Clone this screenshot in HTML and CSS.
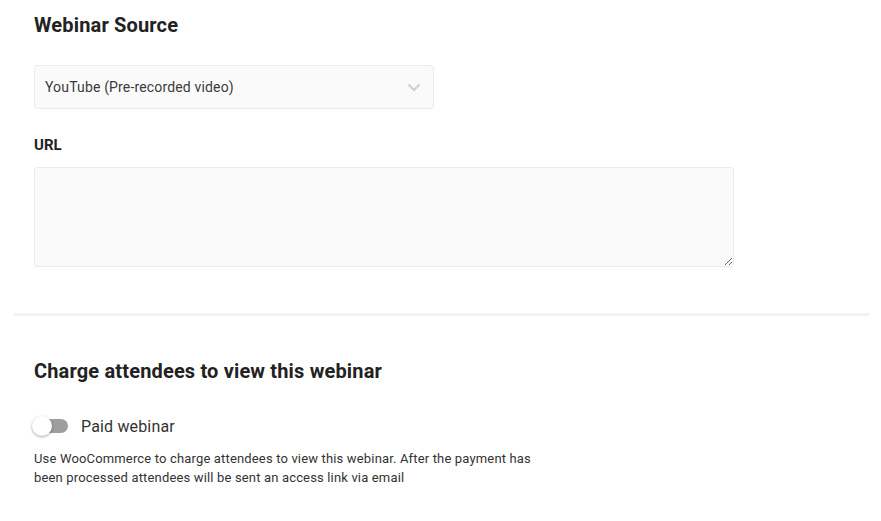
FILE: index.html
```html
<!DOCTYPE html>
<html>
<head>
<meta charset="utf-8">
<link rel="stylesheet" href="styles.css">
</head>
<body>
<div class="page">
  <section class="section section-source">
    <h2 class="title">Webinar Source</h2>
    <div class="select">
      <span class="select-value">YouTube (Pre-recorded video)</span>
      <svg class="chevron" width="14" height="9" viewBox="0 0 14 9"><polyline points="1.5,1.5 7,7 12.5,1.5" fill="none" stroke="#cfcfcf" stroke-width="2"/></svg>
    </div>
    <label class="field-label">URL</label>
    <textarea class="textarea"></textarea>
  </section>
  <div class="divider"></div>
  <section class="section section-charge">
    <h2 class="title">Charge attendees to view this webinar</h2>
    <div class="toggle-row">
      <span class="toggle"><span class="toggle-track"></span><span class="toggle-knob"></span></span>
      <span class="toggle-label">Paid webinar</span>
    </div>
    <p class="help">Use WooCommerce to charge attendees to view this webinar. After the payment has been processed attendees will be sent an access link via email</p>
  </section>
</div>
</body>
</html>
```
FILE: styles.css
```css
html, body {
  margin: 0;
  background: #fff;
}
body {
  font-family: Roboto, "Liberation Sans", sans-serif;
  color: #222;
  letter-spacing: 0.01em;
}
.page {
  padding: 0 11px 0 14px;
}
.section {
  padding-left: 20px;
}
.section-source {
  padding-top: 13px;
  padding-bottom: 46px;
}
.section-charge {
  padding-top: 43px;
}
.title {
  margin: 0;
  font-size: 20px;
  line-height: 24px;
  font-weight: 700;
  color: #222;
}
.select {
  margin-top: 28px;
  width: 400px;
  height: 44px;
  box-sizing: border-box;
  border: 1px solid #ebebeb;
  border-radius: 3px;
  background: #fafafa;
  display: flex;
  align-items: center;
  justify-content: space-between;
  padding: 0 12px 0 10px;
}
.select-value {
  font-size: 14px;
  color: #3a3a3a;
}
.chevron {
  display: block;
}
.field-label {
  display: block;
  margin-top: 27px;
  font-size: 15px;
  line-height: 18px;
  font-weight: 700;
  color: #222;
  letter-spacing: 0;
}
.textarea {
  display: block;
  margin-top: 13px;
  width: 700px;
  height: 100px;
  box-sizing: border-box;
  border: 1px solid #ebebeb;
  border-radius: 3px;
  background: #fafafa;
  resize: both;
  outline: none;
  font-family: inherit;
}
.divider {
  height: 3px;
  background: #f3f3f3;
}
.toggle-row {
  margin-top: 31px;
  height: 24px;
  display: flex;
  align-items: center;
}
.toggle {
  position: relative;
  width: 36px;
  height: 20px;
  margin-left: -2px;
  flex: none;
}
.toggle-track {
  position: absolute;
  left: 10px;
  top: 3px;
  width: 26px;
  height: 14px;
  border-radius: 7px;
  background: #9e9e9e;
}
.toggle-knob {
  position: absolute;
  left: 0;
  top: 0;
  width: 20px;
  height: 20px;
  border-radius: 50%;
  background: #fff;
  box-shadow: 0 1px 3px rgba(0,0,0,0.35);
}
.toggle-label {
  margin-left: 13px;
  font-size: 16px;
  color: #333;
}
.help {
  margin: 11px 0 0;
  max-width: 505px;
  font-size: 13px;
  line-height: 19px;
  color: #333;
}
```
